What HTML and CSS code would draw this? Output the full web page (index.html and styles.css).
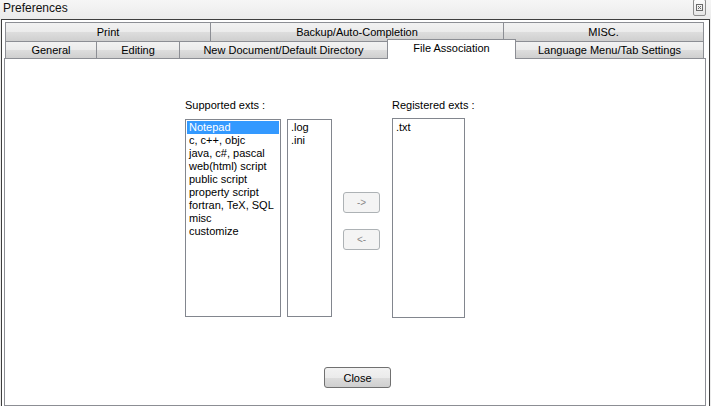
FILE: index.html
```html
<!DOCTYPE html>
<html>
<head>
<meta charset="utf-8">
<title>Preferences</title>
<link rel="stylesheet" href="styles.css">
</head>
<body>
<div class="titlebar">
  <span class="title">Preferences</span>
  <span class="xbtn">
    <svg width="7" height="7" viewBox="0 0 7 7"><rect x="0.5" y="0.5" width="6" height="6" fill="none" stroke="#6a6a6a"/><path d="M2 2L5 5M5 2L2 5" stroke="#6a6a6a" stroke-width="1"/></svg>
  </span>
</div>
<div class="frame">
  <div class="tabs">
    <div class="tabrow row1">
      <div class="tab t-print">Print</div>
      <div class="tab t-backup">Backup/Auto-Completion</div>
      <div class="tab t-misc">MISC.</div>
    </div>
    <div class="tabrow row2">
      <div class="tab t-general">General</div>
      <div class="tab t-editing">Editing</div>
      <div class="tab t-newdoc">New Document/Default Directory</div>
      <div class="tab t-assoc selected">File Association</div>
      <div class="tab t-lang">Language Menu/Tab Settings</div>
    </div>
  </div>
  <div class="panel">
    <div class="assoc">
      <div class="col col1">
        <div class="label">Supported exts :</div>
        <div class="list list1">
          <div class="item sel">Notepad</div>
          <div class="item">c, c++, objc</div>
          <div class="item">java, c#, pascal</div>
          <div class="item">web(html) script</div>
          <div class="item">public script</div>
          <div class="item">property script</div>
          <div class="item">fortran, TeX, SQL</div>
          <div class="item">misc</div>
          <div class="item">customize</div>
        </div>
      </div>
      <div class="col col2">
        <div class="list list2">
          <div class="item">.log</div>
          <div class="item">.ini</div>
        </div>
      </div>
      <div class="col col3">
        <div class="btn disabled">-&gt;</div>
        <div class="btn disabled">&lt;-</div>
      </div>
      <div class="col col4">
        <div class="label label4">Registered exts :</div>
        <div class="list list3">
          <div class="item">.txt</div>
        </div>
      </div>
    </div>
    <div class="closerow">
      <div class="btn close">Close</div>
    </div>
  </div>
</div>
</body>
</html>
```
FILE: styles.css
```css
html, body {
  margin: 0;
  padding: 0;
}
body {
  width: 711px;
  height: 406px;
  overflow: hidden;
  background: #ececec;
  font-family: "Liberation Sans", Arial, sans-serif;
  font-size: 11px;
  color: #000;
}
.titlebar {
  height: 19px;
  display: flex;
  justify-content: space-between;
  align-items: flex-start;
  background: linear-gradient(#f6f6f6, #ebebeb);
}
.title {
  font-size: 12px;
  line-height: 15px;
  margin: 1px 0 0 3px;
  color: #111;
}
.xbtn {
  width: 11px;
  height: 15px;
  margin-right: 5px;
  margin-top: -1px;
  border: 1px solid #8e8e8e;
  border-radius: 2px;
  background: linear-gradient(#fbfbfb, #e6e6e6);
  display: flex;
  align-items: center;
  justify-content: center;
}
.xbtn svg { display: block; }
.frame {
  height: 384px;
  margin: 0 1px;
  border: 1px solid #3e3e3e;
  background: #fff;
  padding: 2px 3px 2px 2px;
  display: flex;
  flex-direction: column;
}
.tabs {
  display: flex;
  flex-direction: column;
  padding-left: 1px;
}
.tabrow {
  display: flex;
}
.tab {
  box-sizing: border-box;
  text-align: center;
  background: linear-gradient(#f2f2f2 0%, #ebebeb 50%, #dddddd 51%, #cfcfcf 100%);
  border: 1px solid #8c8e94;
  color: #000;
}
.row1 .tab {
  height: 20px;
  line-height: 18px;
  border-right: none;
}
.row1 .tab:last-child { border-right: 1px solid #8c8e94; }
.row2 {
  height: 16px;
}
.row2 .tab {
  height: 16px;
  line-height: 16px;
  border-top: none;
  border-bottom: none;
  border-right: none;
}
.row2 .tab:last-child { border-right: 1px solid #8c8e94; }
.t-print { width: 205px; }
.t-backup { width: 293px; }
.t-misc { width: 201px; }
.t-general { width: 91px; }
.t-editing { width: 83px; }
.t-newdoc { width: 208px; }
.t-assoc { width: 129px; }
.t-lang { width: 188px; }
.row2 .tab.selected {
  position: relative;
  z-index: 1;
  height: 20px;
  margin-top: -3px;
  border-top: 1px solid #8c8e94;
  border-right: 1px solid #8c8e94;
  background: #fff;
  line-height: 16px;
}
.row2 .tab.selected + .tab { border-left: none; }
.panel {
  flex: 1;
  border: 1px solid #8c8e94;
  background: #fff;
  padding: 40px 0 0 0;
}
.assoc {
  display: flex;
  align-items: flex-start;
  padding-left: 180px;
}
.col {
  display: flex;
  flex-direction: column;
}
.label {
  line-height: 13px;
  height: 20px;
  white-space: nowrap;
}
.label4 { height: 19px; }
.list {
  box-sizing: border-box;
  border: 1px solid #82868e;
  background: #fff;
  padding: 1px;
}
.list1 { width: 96px; height: 198px; }
.list2 { width: 45px; height: 198px; margin-top: 20px; }
.list3 { width: 73px; height: 200px; padding-top: 2px; }
.col2 { margin-left: 6px; }
.col3 { margin-left: 11px; padding-top: 93px; gap: 16px; }
.col4 { margin-left: 12px; }
.item {
  line-height: 13px;
  height: 13px;
  padding-left: 1px;
  white-space: nowrap;
  color: #000;
}
.list1 .item { padding-left: 2px; }
.list2 .item, .list3 .item { padding-left: 2px; }
.item.sel {
  background: #3399ff;
  color: #fff;
}
.btn {
  box-sizing: border-box;
  display: flex;
  align-items: center;
  justify-content: center;
  border-radius: 3px;
}
.btn.disabled {
  width: 37px;
  height: 21px;
  border: 1px solid #adb2b5;
  background: #f4f4f4;
  color: #8a8a8a;
  font-size: 10px;
}
.closerow {
  display: flex;
  padding-left: 319px;
  margin-top: 49px;
}
.btn.close {
  width: 67px;
  height: 21px;
  border: 1px solid #707070;
  background: linear-gradient(#f2f2f2 0%, #ebebeb 50%, #dddddd 51%, #cfcfcf 100%);
  color: #000;
}
```
